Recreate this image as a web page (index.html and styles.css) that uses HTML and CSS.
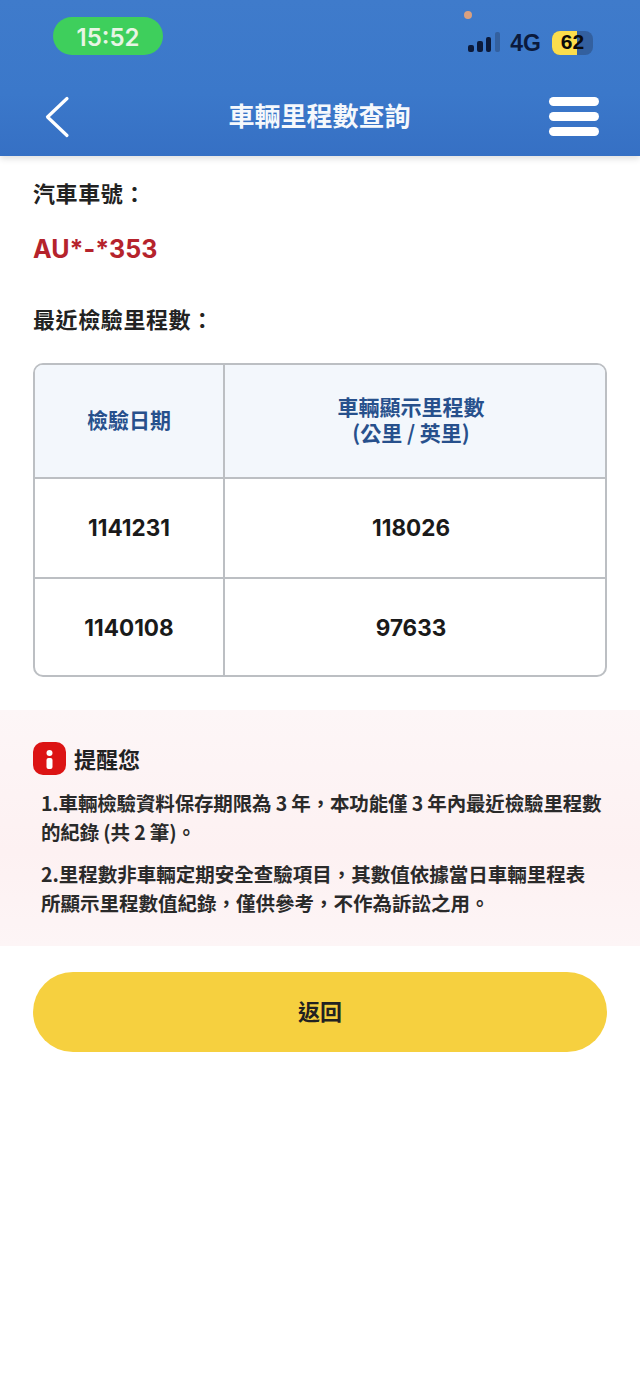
FILE: index.html
```html
<!DOCTYPE html>
<html lang="zh-Hant">
<head>
    <meta charset="UTF-8">
    <meta name="viewport" content="width=device-width, initial-scale=1.0">
    <title>車輛里程數查詢</title>
    <link rel="stylesheet" href="styles.css">
</head>
<body>
<header class="topbar">
    <div class="status-row">
        <span class="time-pill">15:52</span>
        <span class="status-dot"></span>
        <div class="status-right">
            <div class="signal">
                <i class="bar bar1"></i><i class="bar bar2"></i><i class="bar bar3"></i><i class="bar bar4"></i>
            </div>
            <span class="network">4G</span>
            <div class="battery">
                <div class="battery-fill"></div>
                <span class="battery-num">62</span>
            </div>
        </div>
    </div>
    <div class="nav-row">
        <svg class="back-icon" width="26" height="42" viewBox="0 0 26 42">
            <path d="M23 2.5 L3.5 21 L23 39.5" fill="none" stroke="#fff" stroke-width="3.2" stroke-linecap="round" stroke-linejoin="round"/>
        </svg>
        <h1 class="nav-title">車輛里程數查詢</h1>
        <div class="menu-icon"><span></span><span></span><span></span></div>
    </div>
</header>

<main>
    <section class="plate">
        <p class="field-label">汽車車號：</p>
        <p class="plate-no">AU*-*353</p>
        <p class="field-label">最近檢驗里程數：</p>
    </section>

    <div class="table-wrap">
        <div class="cell head">檢驗日期</div>
        <div class="cell head">車輛顯示里程數<br>(公里 / 英里)</div>
        <div class="cell row-a">1141231</div>
        <div class="cell row-a">118026</div>
        <div class="cell row-b">1140108</div>
        <div class="cell row-b">97633</div>
    </div>

    <section class="notice">
        <div class="notice-head">
            <svg width="33" height="33" viewBox="0 0 33 33">
                <rect x="0" y="0" width="33" height="33" rx="10" fill="#dc1414"/>
                <circle cx="16.5" cy="11" r="3" fill="#fff"/>
                <rect x="13.5" y="16" width="6" height="11" rx="2" fill="#fff"/>
            </svg>
            <h2>提醒您</h2>
        </div>
        <p class="notice-text first">1.車輛檢驗資料保存期限為 3 年，本功能僅 3 年內最近檢驗里程數的紀錄 (共 2 筆)。</p>
        <p class="notice-text">2.里程數非車輛定期安全查驗項目，其數值依據當日車輛里程表所顯示里程數值紀錄，僅供參考，不作為訴訟之用。</p>
    </section>

    <div class="actions">
        <button class="back-button">返回</button>
    </div>
</main>
</body>
</html>
```

FILE: styles.css
```css
* { box-sizing: border-box; }
body { margin: 0; background: #fff; color: #1c1c1c; font-family: "Noto Sans CJK TC", "Liberation Sans", sans-serif; min-height: 1383px; }
p, h1, h2 { margin: 0; }

.topbar { height: 156px; background: linear-gradient(180deg, #3f7bcb 0%, #3b78ca 60%, #3670c4 100%); box-shadow: 0 3px 6px rgba(0,0,0,0.12); position: relative; }
.status-row { height: 73px; padding: 17px 47px 0 53px; display: flex; align-items: flex-start; justify-content: space-between; }
.time-pill { width: 110px; height: 38px; border-radius: 19px; background: #3ecf5c; color: #e8f5e4; font: 600 24px/41px "Inter", "Liberation Sans", sans-serif; text-align: center; }
.status-dot { position: absolute; left: 464px; top: 11px; width: 8px; height: 8px; border-radius: 50%; background: #d9a080; }
.status-right { display: flex; align-items: center; margin-top: 14px; }
.signal { display: flex; align-items: flex-end; gap: 3.5px; height: 20px; width: 32px; margin-bottom: 2px; }
.bar { display: block; width: 5.5px; background: #0c1a3a; border-radius: 2px; }
.bar1 { height: 7px; }
.bar2 { height: 11px; }
.bar3 { height: 15px; }
.bar4 { height: 20px; background: #33609f; }
.network { font: bold 23px/24px "Liberation Sans", sans-serif; color: #0b1a3c; margin: 0 11px 0 10px; }
.battery { position: relative; width: 41px; height: 24px; border-radius: 8px; background: #33609f; overflow: hidden; }
.battery-fill { width: 25px; height: 24px; background: #fbdd4c; }
.battery-num { position: absolute; left: 0; right: 0; top: -1px; text-align: center; font: bold 21px/24px "Liberation Sans", sans-serif; color: #0a0a0a; }

.nav-row { height: 83px; padding: 0 41px 0 44px; display: flex; align-items: flex-start; justify-content: space-between; }
.back-icon { margin-top: 23px; }
.nav-title { font-size: 26px; line-height: 36px; font-weight: 700; color: #f5f8fc; margin-top: 24px; margin-left: 20px; }
.menu-icon { width: 50px; margin-top: 24px; display: flex; flex-direction: column; gap: 6px; }
.menu-icon span { display: block; height: 9px; border-radius: 5px; background: #fff; }

.plate { padding: 20px 33px 0; }
.field-label { font-size: 22px; line-height: 32px; font-weight: 700; color: #222; letter-spacing: 0.6px; }
.plate-no { font: bold 25px/32px "Inter", "Liberation Sans", sans-serif; color: #b5232c; margin: 25px 0 37px; }

.table-wrap { margin: 29px 33px 0; display: grid; grid-template-columns: 190px 1fr; grid-template-rows: 114px 100px 96px; border: 2px solid #bcbfc3; border-radius: 10px; overflow: hidden; }
.cell { display: flex; align-items: center; justify-content: center; text-align: center; font: 700 22.5px/26px "Inter", "Liberation Sans", sans-serif; color: #1a1a1a; }
.cell:nth-child(odd) { border-right: 2px solid #bcbfc3; }
.cell:nth-child(even) { padding-right: 8px; }
.head { background: #f3f7fc; color: #27508c; font-family: "Noto Sans CJK TC", sans-serif; font-size: 21px; padding-bottom: 4px; border-bottom: 2px solid #bcbfc3; }
.row-a { border-bottom: 2px solid #bcbfc3; }
.row-b { padding-top: 1px; }

.notice { margin-top: 33px; height: 236px; padding: 32px 33px 0; background: linear-gradient(180deg, #fdf6f7 0%, #fdf1f2 60%, #fdf5f6 100%); }
.notice-head { display: flex; align-items: center; gap: 8px; height: 33px; margin-bottom: 13px; }
.notice-head h2 { font-size: 22px; line-height: 33px; font-weight: 700; color: #222; }
.notice-text { font-size: 19.5px; line-height: 29px; font-weight: 700; color: #2a2a2a; padding-left: 8px; padding-right: 3px; margin-top: 13px; }
.notice-text.first { margin-top: 0; padding-right: 0; letter-spacing: -0.15px; }

.actions { padding: 26px 33px 0; }
.back-button { display: block; width: 100%; height: 80px; padding: 0 0 4px; border: none; border-radius: 40px; background: #f6d03f; color: #222; font-family: "Noto Sans CJK TC", sans-serif; font-size: 22px; font-weight: 700; }
```
